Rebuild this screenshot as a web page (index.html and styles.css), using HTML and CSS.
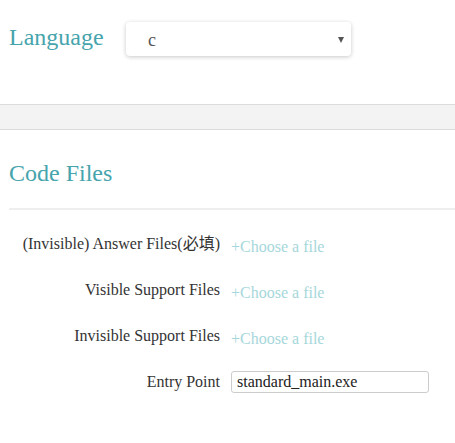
FILE: index.html
```html
<!DOCTYPE html>
<html>
<head>
<meta charset="utf-8">
<link rel="stylesheet" href="styles.css">
</head>
<body>
<div class="lang-row">
  <h2 class="heading lang-title">Language</h2>
  <div class="select">
    <span class="select-value">c</span>
    <span class="select-arrow"></span>
  </div>
</div>
<div class="band"></div>
<h2 class="heading code-title">Code Files</h2>
<div class="divider"></div>
<div class="form">
  <div class="label">(Invisible) Answer Files(必填)</div>
  <div class="choose">+Choose a file</div>
  <div class="label">Visible Support Files</div>
  <div class="choose">+Choose a file</div>
  <div class="label">Invisible Support Files</div>
  <div class="choose">+Choose a file</div>
  <div class="label">Entry Point</div>
  <input class="entry" type="text" value="standard_main.exe">
</div>
</body>
</html>
```
FILE: styles.css
```css
html, body {
  margin: 0;
  padding: 0;
  background: #fff;
  font-family: "Liberation Serif", "Noto Sans CJK SC", serif;
  color: #333;
}
.heading {
  margin: 0;
  font-weight: normal;
  font-size: 24px;
  line-height: 30px;
  color: #46a4ac;
}
.lang-row {
  display: flex;
  align-items: flex-start;
  padding: 22px 0 0 9px;
}
.lang-title {
  width: 117px;
}
.select {
  position: relative;
  width: 225px;
  height: 34px;
  box-sizing: border-box;
  border-radius: 4px;
  background: #fff;
  box-shadow: 0 1px 4px rgba(0,0,0,0.22);
  display: flex;
  align-items: center;
  padding-left: 22px;
}
.select-value {
  font-size: 18px;
  color: #555;
  line-height: 20px;
  margin-top: 2px;
}
.select-arrow {
  position: absolute;
  right: 7px;
  top: 15px;
  width: 0;
  height: 0;
  border-left: 3.5px solid transparent;
  border-right: 3.5px solid transparent;
  border-top: 6px solid #555;
}
.band {
  margin-top: 48px;
  height: 24px;
  background: #f3f3f3;
  border-top: 1px solid #dcdcdc;
  border-bottom: 1px solid #dcdcdc;
}
.code-title {
  margin: 28px 0 0 9px;
}
.divider {
  margin: 20px 0 0 9px;
  height: 2px;
  background: #eeeeee;
}
.form {
  display: grid;
  grid-template-columns: 211px 198px;
  grid-template-rows: 20px 20px 20px 22px;
  column-gap: 11px;
  row-gap: 26px;
  margin: 24px 0 0 9px;
  align-items: start;
}
.label {
  text-align: right;
  font-size: 16px;
  line-height: 20px;
  color: #333;
  white-space: nowrap;
}
.choose {
  font-size: 16px;
  line-height: 20px;
  color: #a6d7db;
  margin-top: 3px;
  white-space: nowrap;
}
.entry {
  margin: -1px 0 0 0;
  width: 198px;
  height: 22px;
  box-sizing: border-box;
  border: 1px solid #cccccc;
  border-radius: 3px;
  padding: 0 5px;
  font-family: "Liberation Serif", serif;
  font-size: 16px;
  color: #222;
  background: #fff;
  outline: none;
}
```
